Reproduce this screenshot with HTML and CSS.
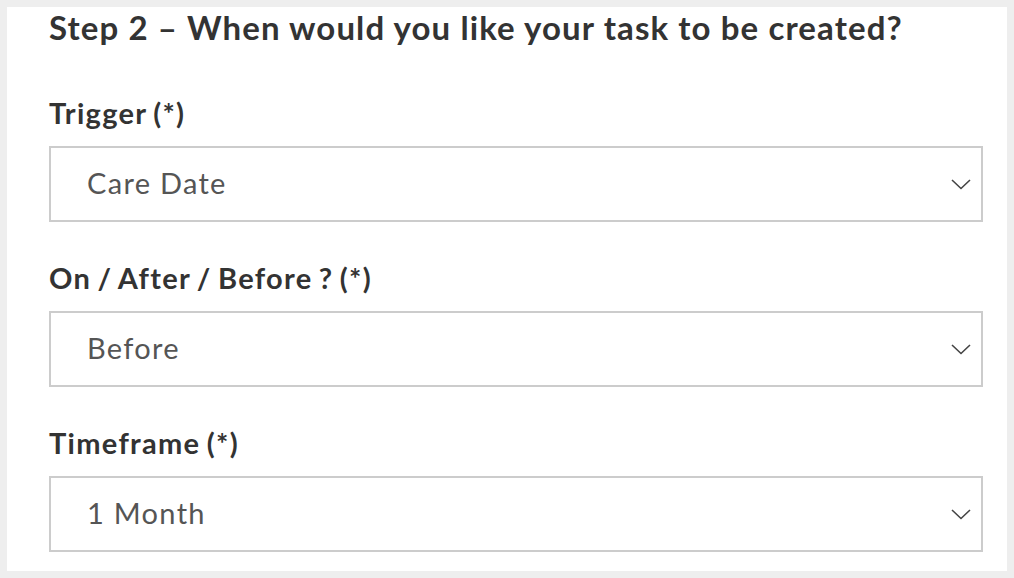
FILE: index.html
```html
<!DOCTYPE html>
<html lang="en">
<head>
<meta charset="utf-8">
<title>Step 2</title>
<link rel="stylesheet" href="styles.css">
</head>
<body>
<div class="panel">
  <h2 class="step-title">Step 2 – When would you like your task to be created?</h2>
  <div class="field">
    <label class="field-label">Trigger (*)</label>
    <div class="select-box">
      <span class="select-value">Care Date</span>
      <svg class="chevron" width="20" height="11" viewBox="0 0 20 11"><path d="M1 1 L10 9.5 L19 1" fill="none" stroke="#444" stroke-width="1.6"/></svg>
    </div>
  </div>
  <div class="field">
    <label class="field-label">On / After / Before ? (*)</label>
    <div class="select-box">
      <span class="select-value">Before</span>
      <svg class="chevron" width="20" height="11" viewBox="0 0 20 11"><path d="M1 1 L10 9.5 L19 1" fill="none" stroke="#444" stroke-width="1.6"/></svg>
    </div>
  </div>
  <div class="field">
    <label class="field-label">Timeframe (*)</label>
    <div class="select-box">
      <span class="select-value">1 Month</span>
      <svg class="chevron" width="20" height="11" viewBox="0 0 20 11"><path d="M1 1 L10 9.5 L19 1" fill="none" stroke="#444" stroke-width="1.6"/></svg>
    </div>
  </div>
</div>
</body>
</html>
```
FILE: styles.css
```css
html, body {
  margin: 0;
  padding: 0;
  background: #eeeeee;
}
body {
  padding: 7px;
  font-family: Lato, "Open Sans", sans-serif;
}
.panel {
  background: #ffffff;
  width: 1000px;
  height: 564px;
  box-sizing: border-box;
  padding: 0 24px 20px 42px;
}
.step-title {
  margin: 0;
  font-size: 33px;
  line-height: 40px;
  font-weight: 700;
  letter-spacing: 1.1px;
  color: #333333;
  white-space: nowrap;
}
.field {
  margin-top: 39px;
}
.field:first-of-type {
  margin-top: 49px;
}
.field-label {
  display: block;
  font-size: 29px;
  line-height: 34px;
  font-weight: 700;
  letter-spacing: 1.3px;
  word-spacing: -2px;
  color: #333333;
  margin-bottom: 16px;
}
.select-box {
  box-sizing: border-box;
  width: 934px;
  height: 76px;
  border: 2px solid #cccccc;
  display: flex;
  align-items: center;
  justify-content: space-between;
  padding: 0 10px 2px 36px;
  background: #fff;
}
.select-value {
  font-size: 29px;
  line-height: 34px;
  letter-spacing: 1.3px;
  color: #555555;
}
.chevron {
  display: block;
  margin-top: 2px;
}
```
